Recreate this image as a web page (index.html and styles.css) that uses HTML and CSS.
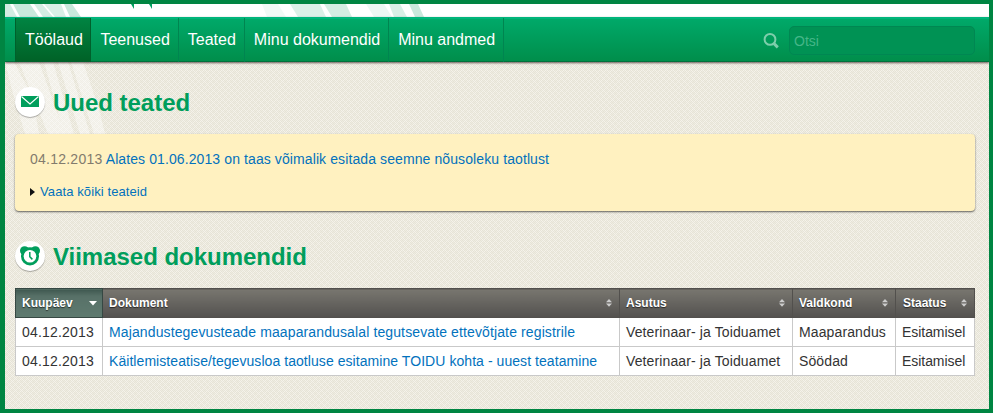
FILE: index.html
```html
<!DOCTYPE html>
<html lang="et">
<head>
<meta charset="utf-8">
<title>Töölaud</title>
<link rel="stylesheet" href="styles.css">
</head>
<body>
<div class="page">
  <header class="banner">
    <svg width="984" height="13" viewBox="5 4 984 13" aria-hidden="true">
      <g fill="#c9e8dc">
        <path d="M5 4h5l7 13H5z" opacity=".8"/>
        <path d="M13 4h17l9 13H20z"/>
        <path d="M34 4h8l11 13H43z" opacity=".8"/>
        <path d="M44 4h17l5 13H55z" opacity=".7"/>
        <path d="M64 4h8l9 13H70z"/>
        <path d="M262 4h16l8 13h-19z" opacity=".25"/>
        <path d="M290 4h30l6 13h-28z" opacity=".65"/>
        <path d="M324 4h22l6 13h-20z" opacity=".8"/>
        <path d="M366 4h18l8 13h-18z" opacity=".35"/>
        <path d="M389 4h11l7 13h-13z" opacity=".7"/>
        <path d="M409 4h9l6 13h-9z"/>
      </g>
      <path d="M131 4h3v5zM149 4h3v5z" fill="#00a060"/>
    </svg>
  </header>
  <nav class="nav">
    <ul class="menu">
      <li class="active"><a href="#">Töölaud</a></li>
      <li><a href="#">Teenused</a></li>
      <li><a href="#">Teated</a></li>
      <li><a href="#">Minu dokumendid</a></li>
      <li><a href="#">Minu andmed</a></li>
    </ul>
    <form class="search">
      <svg width="16" height="16" viewBox="0 0 16 16" fill="none" stroke="#7dceab" aria-hidden="true"><circle cx="7" cy="6.4" r="5.4" stroke-width="2"/><path d="M10.8 10.4l4 4" stroke-width="2.9"/></svg>
      <input type="text" placeholder="Otsi">
    </form>
  </nav>
  <main class="content">
    <svg class="rays" width="130" height="72" viewBox="5 64 130 72" aria-hidden="true">
      <path d="M5 64h9l19 36 6 36H25L12 92z M19 64h20l26 72H48z M44 64h9l21 72H64z M58 64h10l22 72H80z M71 64h12l16 47 6 25H94z" fill="#fff" opacity=".42"/>
    </svg>
    <h2 class="title">
      <span class="badge"><svg width="18" height="11" viewBox="0 0 18 11"><path d="M0 0h18v11H0z" fill="#009e5c"/><path d="M.5.5L9 8 17.5.5" fill="none" stroke="#fff" stroke-width="1.1"/></svg></span>
      Uued teated
    </h2>
    <section class="notice">
      <p class="news"><time>04.12.2013</time> <a href="#">Alates 01.06.2013 on taas võimalik esitada seemne nõusoleku taotlust</a></p>
      <p class="more"><a href="#">Vaata kõiki teateid</a></p>
    </section>
    <h2 class="title second">
      <span class="badge"><svg width="20" height="20" viewBox="0 0 20 20"><g fill="#009e5c"><circle cx="4.6" cy="4.8" r="4.6"/><circle cx="15.4" cy="4.8" r="4.6"/><path d="M5 1.5h10v4H5z"/><circle cx="10" cy="10.4" r="9"/></g><circle cx="10" cy="10.2" r="6.3" fill="#fff"/><path d="M9.8 6v4.8l2.6 2.6" fill="none" stroke="#009e5c" stroke-width="1.5"/></svg></span>
      Viimased dokumendid
    </h2>
    <table class="docs">
      <colgroup><col class="c1"><col class="c2"><col class="c3"><col class="c4"><col class="c5"></colgroup>
      <thead>
        <tr>
          <th class="sorted"><div>Kuupäev <svg width="8" height="5" viewBox="0 0 8 5"><path d="M0 0h8L4 4.5z" fill="#fff"/></svg></div></th>
          <th><div>Dokument <svg width="6" height="8" viewBox="0 0 6 8"><path d="M0 3.2L3 0l3 3.2zM0 4.5h6L3 7.7z" fill="#ccc"/></svg></div></th>
          <th><div>Asutus <svg width="6" height="8" viewBox="0 0 6 8"><path d="M0 3.2L3 0l3 3.2zM0 4.5h6L3 7.7z" fill="#ccc"/></svg></div></th>
          <th><div>Valdkond <svg width="6" height="8" viewBox="0 0 6 8"><path d="M0 3.2L3 0l3 3.2zM0 4.5h6L3 7.7z" fill="#ccc"/></svg></div></th>
          <th class="last"><div>Staatus <svg width="6" height="8" viewBox="0 0 6 8"><path d="M0 3.2L3 0l3 3.2zM0 4.5h6L3 7.7z" fill="#ccc"/></svg></div></th>
        </tr>
      </thead>
      <tbody>
        <tr><td class="date">04.12.2013</td><td><a href="#">Majandustegevusteade maaparandusalal tegutsevate ettevõtjate registrile</a></td><td>Veterinaar- ja Toiduamet</td><td>Maaparandus</td><td class="state">Esitamisel</td></tr>
        <tr><td class="date">04.12.2013</td><td><a class="tight" href="#">Käitlemisteatise/tegevusloa taotluse esitamine TOIDU kohta - uuest teatamine</a></td><td>Veterinaar- ja Toiduamet</td><td>Söödad</td><td class="state">Esitamisel</td></tr>
      </tbody>
    </table>
  </main>
</div>
</body>
</html>
```
FILE: styles.css
```css
* { box-sizing: border-box; }
body {
  margin: 0;
  font: 14px/20px "Liberation Sans", Arial, sans-serif;
  color: #333;
}
a { color: #0272bd; text-decoration: none; }
.page {
  display: flex;
  flex-direction: column;
  height: 413px;
  border: solid #008542;
  border-width: 4px 4px 4px 5px;
  overflow: hidden;
}
.banner { height: 13px; background: #fff; }
.banner svg { display: block; }
.nav {
  position: relative;
  z-index: 1;
  display: flex;
  justify-content: space-between;
  height: 45px;
  padding: 0 14px 0 10px;
  background: linear-gradient(#00a969, #008e4b);
  border-top: 2px solid #00b57b;
  border-bottom: 1px solid #00713c;
  box-shadow: 0 1px 2px rgba(60, 40, 40, .75);
}
.menu {
  display: flex;
  margin: -1px 0 -1px;
  padding: 0;
  list-style: none;
}
.menu li { border-right: 1px solid #008550; }
.menu a {
  display: block;
  padding: 0 8px 0 9px;
  font-size: 16px;
  line-height: 43px;
  color: #fff;
}
.menu .active {
  background: linear-gradient(#008442, #006227);
  border: 1px solid #00602c;
  border-top: 0;
}
.menu .active a { padding-right: 7.6px; }
.search {
  display: flex;
  align-items: flex-start;
  gap: 10px;
  padding-top: 7px;
}
.search svg { margin-top: 7px; }
.search input {
  width: 186px;
  height: 29px;
  padding: 1px 4px 0;
  border: 1px solid #008752;
  border-radius: 5px;
  background: #009254;
  font: 14px "Liberation Sans", Arial, sans-serif;
}
.search input::placeholder { color: #45b688; opacity: 1; }
.content {
  position: relative;
  flex: 1;
  padding: 25px 14px 0 10px;
  background:
    repeating-conic-gradient(rgba(226, 223, 208, .3) 0 25%, transparent 0 50%) 0 0 / 6px 6px,
    repeating-conic-gradient(#e7e4d9 0 25%, #f5f3ea 0 50%) 0 0 / 2px 2px;
}
.rays { position: absolute; left: 0; top: 0; }
.title {
  position: relative;
  display: flex;
  align-items: center;
  gap: 8px;
  height: 30px;
  margin: 0 0 17px;
  padding-top: 1px;
  font-size: 24px;
  line-height: 30px;
  letter-spacing: -.02px;
  color: #009e5c;
}
.badge {
  display: flex;
  align-items: center;
  justify-content: center;
  width: 30px;
  height: 30px;
  margin-top: -2px;
  border-radius: 50%;
  background: #fff;
  box-shadow: 0 1px 1px rgba(0, 0, 0, .3);
}
.notice {
  position: relative;
  height: 77px;
  padding: 15px;
  border-radius: 4px;
  background: #fff1c0;
  box-shadow: 0 1px 2px rgba(0, 0, 0, .6);
}
.notice p { margin: 0; }
.news { letter-spacing: .1px; }
.news time { letter-spacing: .24px; color: #827b6d; }
.more {
  display: flex;
  align-items: center;
  gap: 5px;
  padding-top: 13px;
  font-size: 13px;
  letter-spacing: .1px;
}
.more::before {
  content: "";
  border: solid transparent;
  border-width: 4px 0 4px 5px;
  border-left-color: #111;
}
.title.second { margin-top: 30px; }
.docs {
  width: 960px;
  table-layout: fixed;
  border-collapse: collapse;
  background: #fff;
}
.c1 { width: 87px; }
.c2 { width: 517px; }
.c3 { width: 173px; }
.c4 { width: 103px; }
.c5 { width: 79px; }
.docs th {
  height: 29px;
  padding: 0 7px 0 6px;
  border: 1px solid #52504d;
  background: linear-gradient(#78766f, #53514f);
  font-size: 12px;
  color: #fff;
  text-align: left;
  text-shadow: 0 1px 1px rgba(0, 0, 0, .6);
}
.docs th.sorted {
  padding-right: 5px;
  border-color: #364843;
  background: linear-gradient(#3f5850, #587168 7px, #5e7a6f);
}
.docs th.last { padding-left: 7px; }
.docs th div {
  display: flex;
  align-items: center;
  justify-content: space-between;
}
.docs td {
  height: 29px;
  padding: 0 6px;
  border: 1px solid #c9c9c9;
  letter-spacing: .12px;
  white-space: nowrap;
}
.docs .date { letter-spacing: .2px; }
.docs .tight { letter-spacing: .06px; }
.docs .state { letter-spacing: -.05px; }
```
